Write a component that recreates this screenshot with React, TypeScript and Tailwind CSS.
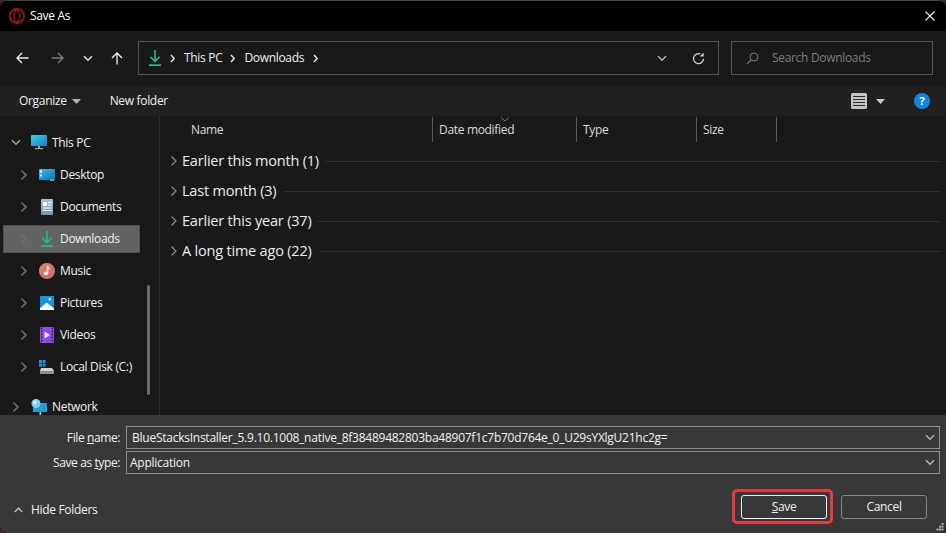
import React from "react";

const Chev = ({ c = "#8a8a8a", w = 1.6 }: { c?: string; w?: number }) => (
  <svg width="8" height="12" viewBox="0 0 8 12"><path d="M1.5 1.5 6 6l-4.500 4.500" fill="none" stroke={c} strokeWidth={w} /></svg>
);
const ChevDown = ({ c = "#d0d0d0", w = 1.4 }: { c?: string; w?: number }) => (
  <svg width="10" height="7" viewBox="0 0 10 7"><path d="M1 1.200 5 5.200l4-4" fill="none" stroke={c} strokeWidth={w} /></svg>
);
const Crumb = () => (
  <svg width="6" height="9" viewBox="0 0 6 9"><path d="M1 1l3.200 3.500L1 8" fill="none" stroke="#e8e8e8" strokeWidth="1.400" /></svg>
);
const DownloadIcon = () => (
  <svg width="12" height="16" viewBox="0 0 12 16"><path d="M6 0v11.500M1.300 6.800 6 11.500l4.700-4.700" fill="none" stroke="#1dbb97" strokeWidth="1.600" /><rect x="0" y="14.300" width="12" height="1.700" fill="#1dbb97" /></svg>
);

const Pc = () => (
  <svg width="16" height="15" viewBox="0 0 16 15"><defs><linearGradient id="pc" x1="0" y1="0" x2="1" y2="1"><stop offset="0" stopColor="#3fd0ef" /><stop offset="1" stopColor="#0f7fc4" /></linearGradient></defs><rect x="0" y="0" width="16" height="11" rx="1" fill="url(#pc)" /><rect x="7" y="11" width="2" height="2" fill="#9aa7b0" /><rect x="4" y="13" width="8" height="1.200" fill="#9aa7b0" /></svg>
);
const Desktop = () => (
  <svg width="16" height="12" viewBox="0 0 16 12"><defs><linearGradient id="dk" x1="0" y1="0" x2="1" y2="1"><stop offset="0" stopColor="#35bfe8" /><stop offset="1" stopColor="#0d70b8" /></linearGradient></defs><rect width="16" height="11" rx="1" fill="url(#dk)" /><rect x="1" y="1.500" width="2" height="2" fill="#fff" /><rect x="1" y="5.500" width="2" height="2" fill="#e8f6fc" /><rect x="11.500" y="10.500" width="1.200" height="1.500" fill="#e8e8e8" /><rect x="13.500" y="10.500" width="1.200" height="1.500" fill="#e8e8e8" /></svg>
);
const Docs = () => (
  <svg width="12" height="16" viewBox="0 0 12 16"><defs><linearGradient id="dc" x1="0" y1="0" x2="0" y2="1"><stop offset="0" stopColor="#a9c4de" /><stop offset="1" stopColor="#7195b8" /></linearGradient></defs><rect width="12" height="16" rx="1" fill="url(#dc)" /><rect x="2" y="3" width="4" height="4" fill="#fff" /><path d="M7 3.500h3.500M7 6h3.500M2 9h8.500M2 11.500h8.500" stroke="#fff" strokeWidth="1" /></svg>
);
const Music = () => (
  <svg width="16" height="16" viewBox="0 0 16 16"><defs><linearGradient id="mu" x1="0" y1="0" x2="1" y2="1"><stop offset="0" stopColor="#e98a5a" /><stop offset="1" stopColor="#c9607e" /></linearGradient></defs><circle cx="8" cy="8" r="8" fill="url(#mu)" /><path d="M8.600 3.500v6.500" stroke="#fff" strokeWidth="1.400" /><path d="M8.600 3.500c.4 1.400 1.600 1.700 2.200 2.600" stroke="#fff" strokeWidth="1.100" fill="none" /><circle cx="7" cy="10.400" r="1.900" fill="#fff" /></svg>
);
const Pictures = () => (
  <svg width="14" height="14" viewBox="0 0 14 14"><rect width="14" height="14" fill="#1a90e6" /><circle cx="9.800" cy="3.200" r="1.200" fill="#fff" /><path d="M0 12.500 6.500 6.500l7.500 6V14H0z" fill="#ffffff" /></svg>
);
const Videos = () => (
  <svg width="14" height="16" viewBox="0 0 14 16"><rect width="14" height="16" rx="1" fill="#8a4be0" /><path d="M1 1.500h1.400M1 4.500h1.400M1 7.500h1.400M1 10.500h1.400M1 13.500h1.400M11.600 1.500H13M11.600 4.500H13M11.600 7.500H13M11.600 10.500H13M11.600 13.500H13" stroke="#2b1458" strokeWidth="1.300" /><path d="M4.500 4.500v7L10 8z" fill="#e8dcff" /></svg>
);
const Disk = () => (
  <svg width="16" height="15" viewBox="0 0 16 15"><rect x="0" y="0" width="3" height="3" fill="#1f8fe0" /><rect x="3.600" y="0" width="3" height="3" fill="#1f8fe0" /><rect x="0" y="3.600" width="3" height="3" fill="#1f8fe0" /><rect x="3.600" y="3.600" width="3" height="3" fill="#1f8fe0" /><path d="M2 8h11l2 3v3H1v-3z" fill="#d0d0d0" /><rect x="1" y="11" width="14" height="3" fill="#8c8c8c" /><rect x="11.500" y="12" width="2" height="1" fill="#3fe06a" /></svg>
);
const Net = () => (
  <svg width="16" height="16" viewBox="0 0 16 16"><rect x="2" y="4" width="14" height="9" fill="#1f9fd8" /><circle cx="5" cy="4.500" r="4.500" fill="#7fd0ee" /><circle cx="4" cy="3.500" r="2" fill="#c8eefa" /><rect x="8.500" y="13" width="1.600" height="3" fill="#b8c4cc" /></svg>
);

const navItems = [
  { label: "Desktop", icon: <Desktop /> },
  { label: "Documents", icon: <Docs /> },
  { label: "Downloads", icon: <DownloadIcon />, active: true },
  { label: "Music", icon: <Music /> },
  { label: "Pictures", icon: <Pictures /> },
  { label: "Videos", icon: <Videos /> },
  { label: "Local Disk (C:)", icon: <Disk /> },
];

const groups = ["Earlier this month (1)", "Last month (3)", "Earlier this year (37)", "A long time ago (22)"];

const Combo = ({ children, pad }: { children: React.ReactNode; pad: string }) => (
  <div className={`flex h-[23px] items-center justify-between border border-[#8f8f8f] bg-[#383838] pr-[4px] ${pad}`}>
    <span className="tracking-[-0.25px] text-[#f2f2f2]">{children}</span>
    <ChevDown c="#b5b5b5" />
  </div>
);

export default function App() {
  return (
    <div className="h-[533px] w-[946px] overflow-hidden bg-[#3a2a2e] text-[12px] tracking-[-0.32px] text-[#f0f0f0] [font-family:'Open_Sans','Noto_Sans',sans-serif]">
      <div className="flex h-[533px] flex-col overflow-hidden rounded-[7px] border-t border-[#444] bg-black">
        {/* title */}
        <div className="flex h-[30px] shrink-0 items-center justify-between bg-black pl-[9px] pr-[11px]">
          <div className="flex items-center gap-[5px]">
            <svg width="16" height="16" viewBox="0 0 16 16"><ellipse cx="8" cy="8" rx="7.200" ry="7.200" fill="none" stroke="#b8142c" strokeWidth="1.500" /><ellipse cx="8" cy="8" rx="3" ry="5.900" fill="none" stroke="#b8142c" strokeWidth="1.200" /></svg>
            <span className="text-white">Save As</span>
          </div>
          <svg width="10" height="10" viewBox="0 0 10 10"><path d="M.5.500l9 9M9.500.500l-9 9" stroke="#f0f0f0" strokeWidth="1.100" /></svg>
        </div>

        {/* nav */}
        <div className="flex h-[55px] shrink-0 items-start bg-[#191919] pt-[10px]">
          <div className="flex h-[34px] w-[138px] shrink-0 items-center pl-[16px]">
            <svg width="13" height="12" viewBox="0 0 13 12"><path d="M12.500 6H1M6 1 1 6l5 5" fill="none" stroke="#f0f0f0" strokeWidth="1.400" /></svg>
            <svg width="13" height="12" viewBox="0 0 13 12" className="ml-[22px]"><path d="M.5 6H12M7 1l5 5-5 5" fill="none" stroke="#7d7d7d" strokeWidth="1.400" /></svg>
            <span className="ml-[19px] flex"><ChevDown c="#e0e0e0" w={1.500} /></span>
            <svg width="12" height="13" viewBox="0 0 12 13" className="ml-[18px]"><path d="M6 12.500V1M1 6l5-5 5 5" fill="none" stroke="#f0f0f0" strokeWidth="1.300" /></svg>
          </div>
          <div className="flex h-[34px] w-[581px] shrink-0 items-center border border-[#555] pl-[10px] pr-[13px]">
            <DownloadIcon />
            <span className="ml-[9px] flex"><Crumb /></span>
            <span className="ml-[8px]">This PC</span>
            <span className="ml-[8px] flex"><Crumb /></span>
            <span className="ml-[8px]">Downloads</span>
            <span className="ml-[9px] flex"><Crumb /></span>
            <span className="ml-auto flex"><ChevDown c="#d0d0d0" w={1.200} /></span>
            <svg width="13" height="13" viewBox="0 0 13 13" className="ml-[25px]"><path d="M11.500 6.800A5 5 0 1 1 8.500 2" fill="none" stroke="#d8d8d8" strokeWidth="1.300" /><path d="M11.600 .8v3.800H7.800z" fill="#d8d8d8" /></svg>
          </div>
          <div className="ml-[12px] flex h-[34px] w-[202px] shrink-0 items-center border border-[#555] pl-[14px] text-[#7d7d7d]">
            <svg width="13" height="13" viewBox="0 0 13 13"><circle cx="8" cy="5" r="4" fill="none" stroke="#7a7a7a" strokeWidth="1" /><path d="M5 8l-4.200 4.200" stroke="#7a7a7a" strokeWidth="1.100" /></svg>
            <span className="ml-[13px]">Search Downloads</span>
          </div>
        </div>

        {/* commands */}
        <div className="flex h-[30px] shrink-0 items-center bg-[#202020] pl-[19px] pr-[16px]">
          <span>Organize</span>
          <svg width="9" height="5" viewBox="0 0 9 5" className="ml-[5px]"><path d="M0 0h9L4.500 5z" fill="#b0b0b0" /></svg>
          <span className="ml-[29px]">New folder</span>
          <svg width="16" height="16" viewBox="0 0 16 16" className="ml-auto"><rect width="16" height="16" rx="1.500" fill="#c4c4c4" /><path d="M2 3.500h12M2 6.500h12M2 9.500h12M2 12.500h12" stroke="#2a2a2a" strokeWidth="1" /></svg>
          <svg width="9" height="5" viewBox="0 0 9 5" className="ml-[9px]"><path d="M0 0h9L4.500 5z" fill="#c8c8c8" /></svg>
          <div className="ml-[29px] flex h-4 w-4 items-center justify-center rounded-full bg-[#0f86e0] text-[11px] font-bold text-white">?</div>
        </div>

        {/* body */}
        <div className="flex min-h-0 flex-1 bg-[#191919]">
          <div className="relative flex w-[160px] shrink-0 flex-col overflow-hidden border-r border-[#2b2b2b] pt-[12px]">
            <div className="flex h-[29px] shrink-0 items-center pl-[11px]">
              <ChevDown c="#9a9a9a" w={1.600} />
              <span className="ml-[10px] flex"><Pc /></span>
              <span className="ml-[5px]">This PC</span>
            </div>
            {navItems.map((n) => (
              <div key={n.label} className={`ml-[3px] mt-[4px] flex h-[28px] w-[137px] shrink-0 items-center border pl-[16px] ${n.active ? "border-[#4f4f4f] bg-[#636363]" : "border-transparent"}`}>
                <Chev c="#6f6f6f" />
                <span className="ml-[8px] flex w-[22px] shrink-0 justify-center">{n.icon}</span>
                <span className="ml-[2px] whitespace-nowrap">{n.label}</span>
              </div>
            ))}
            <div className="mt-[12px] flex h-[28px] shrink-0 items-center pl-[12px]">
              <Chev c="#6f6f6f" />
              <span className="ml-[11px] flex"><Net /></span>
              <span className="ml-[5px]">Network</span>
            </div>
            <div className="absolute left-[147px] top-[169px] h-[110px] w-[3px] rounded-full bg-[#6b6b6b]" />
          </div>

          <div className="min-w-0 flex-1 pl-[1px]">
            <div className="relative flex h-[26px] pt-[1px] text-[#dcdcdc]">
              <div className="flex h-[25px] w-[272px] items-center border-r border-[#5a5a5a] pl-[30px]">Name</div>
              <div className="flex h-[25px] w-[144px] items-center border-r border-[#5a5a5a] pl-[6px]">Date modified</div>
              <div className="flex h-[25px] w-[120px] items-center border-r border-[#5a5a5a] pl-[6px]">Type</div>
              <div className="flex h-[25px] w-[80px] items-center border-r border-[#5a5a5a] pl-[6px]">Size</div>
              <svg width="10" height="5" viewBox="0 0 10 5" className="absolute left-[339px] top-[1px]"><path d="M1 .5 5 4l4-3.500" fill="none" stroke="#7d7d7d" strokeWidth="1" /></svg>
            </div>
            <div className="pt-[4px]">
              {groups.map((g) => (
                <div key={g} className="flex h-[30px] items-center pl-[9px] pr-[6px]">
                  <Chev c="#8a8a8a" w={1.200} />
                  <span className="ml-[4px] whitespace-nowrap text-[14.5px] leading-none tracking-[-0.2px] text-[#ececec]">{g}</span>
                  <div className="ml-[7px] h-px flex-1 bg-[#2f2f2f]" />
                </div>
              ))}
            </div>
          </div>
        </div>

        {/* footer */}
        <div className="relative flex h-[118px] shrink-0 flex-col bg-[#383838] pl-[126px] pr-[6px] pt-[11px]">
          <div className="flex items-center">
            <span className="absolute left-0 w-[120px] text-right tracking-[-0.4px]">File <span className="underline">n</span>ame:</span>
            <div className="flex-1"><Combo pad="pl-[5px]">BlueStacksInstaller_5.9.10.1008_native_8f38489482803ba48907f1c7b70d764e_0_U29sYXlgU21hc2g=</Combo></div>
          </div>
          <div className="mt-[2px] flex items-center">
            <span className="absolute left-0 w-[120px] text-right tracking-[-0.4px]">Save as <span className="underline">t</span>ype:</span>
            <div className="flex-1"><Combo pad="pl-[3px]">Application</Combo></div>
          </div>
          <div className="mt-[15px] flex items-center justify-end pr-[13px]">
            <div className="rounded-[5px] border-[3px] border-[#e53a3f] pb-[2px] pl-[6px] pr-[3px] pt-[3px]">
              <button className="flex h-[24px] w-[86px] items-center justify-center rounded-[3px] border border-[#f0f0f0] bg-[#383838]"><span><span className="underline">S</span>ave</span></button>
            </div>
            <button className="ml-[8px] flex h-[24px] w-[86px] items-center justify-center rounded-[3px] border border-[#858585] bg-[#383838]">Cancel</button>
          </div>
          <div className="absolute bottom-[14px] left-[14px] flex items-center">
            <svg width="9" height="6" viewBox="0 0 9 6"><path d="M.8 5 4.500 1.200 8.200 5" fill="none" stroke="#b5b5b5" strokeWidth="1.600" /></svg>
            <span className="ml-[8px]">Hide Folders</span>
          </div>
          <svg width="8" height="8" viewBox="0 0 8 8" className="absolute bottom-[2px] right-[2px]"><path d="M5.500 0h2v2h-2zM3 2.800h2v2H3zM5.500 2.800h2v2h-2zM.5 5.500h2v2h-2zM3 5.500h2v2H3zM5.500 5.500h2v2h-2z" fill="#a8a8a8" /></svg>
        </div>
      </div>
    </div>
  );
}
